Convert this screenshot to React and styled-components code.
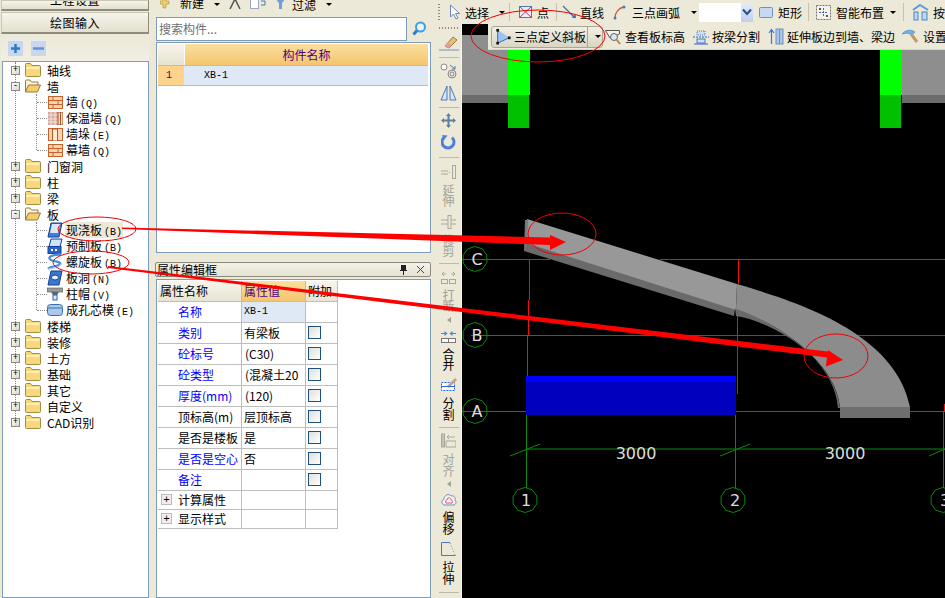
import React from "react";
import styled, { createGlobalStyle } from "styled-components";

const GlobalStyle = createGlobalStyle`
    html, body { margin: 0; padding: 0; }
    body { font: 12px "Noto Sans CJK SC", "Liberation Sans", sans-serif; color: #000; }
`;

const Page = styled.div`
    position: relative;
    display: flex;
    width: 945px;
    height: 598px;
    overflow: hidden;
    background: #ECE9D8;
`;

/* ---------- left column ---------- */
const LeftColumn = styled.div`
    display: flex;
    flex-direction: column;
    width: 155px;
    flex: none;
    padding: 0 6px 0 1px;
    box-sizing: border-box;
`;
const NavButton = styled.div`
    display: flex;
    align-items: ${p => (p.$clipped ? "flex-end" : "center")};
    justify-content: center;
    height: ${p => p.$h}px;
    margin-bottom: 1px;
    padding-bottom: ${p => (p.$clipped ? 6 : 0)}px;
    overflow: hidden;
    line-height: ${p => (p.$clipped ? "6px" : "20px")};
    font-size: 12px;
    letter-spacing: 0.5px;
    background: linear-gradient(#F6F4EC, #E4E0CE);
    border: 1px solid #C9C6B4;
    border-bottom: 2px solid #8C8B7C;
    border-right-color: #8C8B7C;
    box-sizing: border-box;
`;
const TreeTools = styled.div`
    display: flex;
    align-items: center;
    gap: 8px;
    height: 26px;
    padding-left: 7px;
    background: linear-gradient(#ECE9D8, #F1EFE4);
`;
const SquareButton = styled.div`
    display: flex;
    align-items: center;
    justify-content: center;
    width: 15px;
    height: 15px;
    background: #C9D6EE;
    border-top: 1px solid #E4ECF8;
`;
const TreePanel = styled.div`
    flex: 1;
    margin-left: 1px;
    background: #FFF;
    border: 1px solid #7F9DB9;
`;
const TreeGuide = styled.div`
    margin-left: 12px;
    border-left: 1px dotted #888;
`;
const ChildGuide = styled.div`
    margin-left: 20px;
    border-left: 1px dotted #888;
`;
const Row = styled.div`
    position: relative;
    display: flex;
    align-items: center;
    height: 16px;
    white-space: nowrap;
    ${p => p.$last && `
        &::before {
            content: "";
            position: absolute;
            left: -1px;
            top: 9px;
            bottom: 0;
            width: 1px;
            background: #FFF;
        }
    `}
`;
const Expander = styled.span`
    position: relative;
    display: flex;
    align-items: center;
    justify-content: center;
    width: 9px;
    height: 9px;
    margin: 0 5px 0 -5px;
    flex: none;
    background: linear-gradient(135deg, #FFF, #D8D4C4);
    border: 1px solid #8A8A8A;
    box-sizing: border-box;
    font: 9px/7px "Liberation Mono", monospace;
`;
const Connector = styled.span`
    width: 10px;
    flex: none;
    border-top: 1px dotted #888;
`;
const IconSlot = styled.span`
    display: flex;
    align-items: center;
    justify-content: center;
    width: ${p => p.$w || 16}px;
    flex: none;
`;
const TreeLabel = styled.span`
    margin-left: ${p => p.$indent || 5}px;
    padding: 0 1px;
    line-height: 15px;
    background: ${p => (p.$selected ? "#ECE9D8" : "transparent")};
`;
const Key = styled.span`
    margin-left: 2px;
    font: 10px "Liberation Mono", monospace;
`;

/* ---------- middle column ---------- */
const MiddleColumn = styled.div`
    display: flex;
    flex-direction: column;
    width: 278px;
    flex: none;
`;
const ClippedBar = styled.div`
    display: flex;
    align-items: flex-end;
    gap: 9px;
    height: 13px;
    padding: 0 0 4px 5px;
    overflow: hidden;
    box-sizing: border-box;
    line-height: 8px;
`;
const SearchRow = styled.div`
    display: flex;
    align-items: center;
    height: 25px;
    margin: 3px 2px 1px 1px;
`;
const SearchBox = styled.div`
    display: flex;
    align-items: center;
    width: 251px;
    height: 24px;
    padding-left: 2px;
    box-sizing: border-box;
    color: #6F6F6F;
    background: #FFF;
    border: 1px solid #7F9DB9;
`;
const SearchButton = styled.div`
    display: flex;
    align-items: center;
    justify-content: center;
    flex: 1;
`;
const ListPanel = styled.div`
    height: 211px;
    margin: 0 2px 0 1px;
    padding: 1px 2px 1px 1px;
    box-sizing: border-box;
    background: #FFF;
    border: 1px solid #7F9DB9;
`;
const ListRow = styled.div`
    display: grid;
    grid-template-columns: 26px 1fr;
    height: ${p => p.$h}px;
    border-bottom: 1px solid #B8BCC4;
`;
const CornerCell = styled.div`
    background: linear-gradient(#F7F5EC, #E6E2D0);
`;
const NumberCell = styled.div`
    display: flex;
    align-items: center;
    padding-left: 8px;
    color: #400070;
    font: 10px "Liberation Mono", monospace;
    background: #FFD38C;
`;
const OrangeHead = styled.div`
    display: flex;
    align-items: center;
    justify-content: center;
    color: #4B0082;
    background: linear-gradient(#FADF9E, #F4C56E);
    border-left: 1px solid #FFF;
`;
const NameCell = styled.div`
    display: flex;
    align-items: center;
    padding-left: 20px;
    font: 10px "Liberation Mono", monospace;
    background: #DFE8F5;
`;
const TitleBar = styled.div`
    display: flex;
    align-items: center;
    height: 15px;
    margin: 9px 2px 0 0;
    padding: 0 5px 0 1px;
    box-sizing: border-box;
    background: linear-gradient(#F4F2E8, #E6E3D2);
    border: 1px solid #8A8A80;
    border-radius: 2px;
`;
const TitleText = styled.span`
    flex: 1;
    line-height: 13px;
`;
const TitleIcons = styled.span`
    display: flex;
    align-items: center;
    gap: 8px;
`;
const PropertyPanel = styled.div`
    flex: 1;
    margin: 2px 2px 0 1px;
    padding: 1px 1px;
    background: #FFF;
    border: 1px solid #7F9DB9;
`;
const PropRow = styled.div`
    display: grid;
    grid-template-columns: 84px 64px 32px;
    width: 180px;
    height: ${p => p.$h || 21}px;
`;
const PropCell = styled.div`
    display: flex;
    align-items: center;
    overflow: hidden;
    white-space: nowrap;
    padding: 0 0 1px ${p => p.$pad || 0}px;
    color: ${p => p.$color || "#000"};
    font-family: ${p => (p.$mono ? '"Liberation Mono", monospace' : "inherit")};
    font-size: ${p => (p.$mono ? "10px" : "12px")};
    background: ${p => p.$bg || "#FFF"};
    border-right: 1px solid #BDBDBD;
    border-bottom: 1px solid #BDBDBD;
    box-sizing: border-box;
`;
const PlusBox = styled.span`
    display: flex;
    align-items: center;
    justify-content: center;
    width: 11px;
    height: 11px;
    margin: 0 6px 0 3px;
    font: 11px/10px "Liberation Mono", monospace;
    background: #EEE;
    border: 1px solid #BBB;
    box-sizing: border-box;
`;
const CheckBox = styled.span`
    width: 13px;
    height: 13px;
    margin-left: 2px;
    background: linear-gradient(135deg, #DEDEDA, #FFF);
    border: 1px solid #1C5180;
    box-sizing: border-box;
`;

/* ---------- right column ---------- */
const RightColumn = styled.div`
    display: flex;
    flex-direction: column;
    flex: 1;
    min-width: 0;
    margin-left: 3px;
`;
const TopBar = styled.div`
    display: flex;
    align-items: center;
    height: 24px;
    padding-left: 2px;
    overflow: hidden;
    white-space: nowrap;
`;
const Grip = styled.span`
    width: 2px;
    height: 16px;
    margin-right: ${p => p.$gap || 0}px;
    flex: none;
    background: repeating-linear-gradient(#8C8A7C 0 1px, transparent 1px 3px);
`;
const BarItem = styled.span`
    display: flex;
    align-items: center;
    gap: ${p => p.$gap || 5}px;
    margin-left: ${p => p.$ml || 0}px;
    flex: none;
`;
const BarSep = styled.span`
    width: 1px;
    height: 18px;
    margin: 0 ${p => p.$r || 9}px 0 ${p => p.$l || 9}px;
    flex: none;
    background: #C5C2B0;
`;
const Caret = styled.span`
    width: 0;
    height: 0;
    margin-left: ${p => p.$ml || 6}px;
    margin-bottom: ${p => p.$lift || 0}px;
    flex: none;
    border: 3px solid transparent;
    border-top: 3px solid #000;
    border-bottom: 0;
`;
const SelectBox = styled.span`
    display: flex;
    align-items: center;
    justify-content: flex-end;
    width: 54px;
    height: 19px;
    margin-left: ${p => p.$ml || 7}px;
    flex: none;
    background: #FFF;
`;
const SelectArrow = styled.span`
    display: flex;
    align-items: center;
    justify-content: center;
    width: 12px;
    height: 19px;
    background: linear-gradient(#E4ECF8, #BFD0EC);
`;
const WorkArea = styled.div`
    position: relative;
    display: flex;
    flex: 1;
    min-height: 0;
`;
const SideBar = styled.div`
    display: flex;
    flex-direction: column;
    align-items: center;
    width: 26px;
    flex: none;
    border-right: 1px solid #F7F6EE;
    box-sizing: border-box;
`;
const SideGrip = styled.div`
    width: 20px;
    height: 2px;
    margin: 3px 0 2px;
    flex: none;
    background: repeating-linear-gradient(90deg, #8C8A7C 0 1px, transparent 1px 3px);
`;
const SideSep = styled.div`
    width: 20px;
    height: 1px;
    margin: 3px 0 2px;
    flex: none;
    background: #BDBAA8;
`;
const SideButton = styled.div`
    display: flex;
    flex-direction: column;
    align-items: center;
    justify-content: center;
    gap: 5px;
    height: ${p => p.$h}px;
    flex: none;
`;
const SideLabel = styled.span`
    width: 12px;
    font-size: 12px;
    line-height: 11.5px;
    text-align: center;
    color: ${p => (p.$off ? "#A3A198" : "#000")};
`;
const MoreMark = styled.span`
    width: 0;
    height: 0;
    border: 3px solid transparent;
    border-right: 4px solid #A3A198;
    border-left: 0;
`;
const Canvas = styled.div`
    flex: 1;
    background: #000;
    overflow: hidden;
`;
const CanvasSvg = styled.svg`
    display: block;
`;
const FloatBar = styled.div`
    position: absolute;
    top: 0;
    left: 52px;
    right: 0;
    display: flex;
    align-items: center;
    height: 26px;
    padding-left: 3px;
    white-space: nowrap;
    overflow: hidden;
    background: #ECE9D8;
    border-bottom: 1px solid #D8D5C4;
    box-sizing: border-box;
`;
const PressedButton = styled.div`
    display: flex;
    align-items: center;
    width: 112px;
    height: 22px;
    flex: none;
    background: linear-gradient(#F1EFE4, #DAD6C4);
    border: 1px solid #A9A794;
    border-radius: 3px;
    box-sizing: border-box;
`;
const PressedLabel = styled.span`
    display: flex;
    align-items: center;
    gap: 3px;
    flex: 1;
    padding-left: 3px;
`;
const PressedArrow = styled.span`
    display: flex;
    align-items: center;
    justify-content: center;
    width: 14px;
    height: 20px;
    border-left: 1px solid #A9A794;
`;
const Overlay = styled.svg`
    position: absolute;
    top: 0;
    left: 0;
    pointer-events: none;
`;

/* ---------- tree icons ---------- */
const Folder = () => (
    <svg width="16" height="14" viewBox="0 0 16 14">
        <path d="M.5 3V12.5a1 1 0 0 0 1 1h13a1 1 0 0 0 1-1V3.500a1 1 0 0 0-1-1H7L5.500.5H1.500a1 1 0 0 0-1 1Z" fill="#F8D877" stroke="#A58B4A" />
        <path d="M1.500 4H14.500V6H1.500Z" fill="#FCEFB9" />
    </svg>
);
const OpenFolder = () => (
    <svg width="16" height="14" viewBox="0 0 16 14">
        <path d="M.5 13V2a1 1 0 0 1 1-1H5L6.500 3H13V6" fill="#FBF3D0" stroke="#8D7C52" />
        <path d="M.5 13 3.500 6H15.500L12.500 13Z" fill="#F6CE63" stroke="#8D7C52" />
    </svg>
);
const Brick = () => (
    <svg width="15" height="13" viewBox="0 0 15 13">
        <rect x=".5" y=".5" width="14" height="12" fill="#F6D4B5" stroke="#C9622A" />
        <path d="M1 4.500H14M1 8.500H14M5 1V4.500M10 4.500V8.500M5 8.500V12" stroke="#C9622A" />
    </svg>
);
const InsulatedWall = () => (
    <svg width="15" height="13" viewBox="0 0 15 13">
        <rect width="10" height="13" fill="#D9A9A0" />
        <path d="M0 3H10M0 7H10M0 10H10M3 0V13M7 0V13" stroke="#F2E3DC" />
        <rect x="10" width="5" height="13" fill="#F7D9BC" stroke="#A8522A" />
        <path d="M12.500 0V13" stroke="#A8522A" />
    </svg>
);
const Pier = () => (
    <svg width="15" height="13" viewBox="0 0 15 13">
        <rect x=".5" y=".5" width="14" height="12" fill="#F6D4B5" stroke="#C9622A" />
        <rect x="4.500" y="1" width="5" height="12" fill="#FBEBD8" stroke="#B9551F" />
    </svg>
);
const Slab = () => (
    <svg width="16" height="16" viewBox="0 0 16 16">
        <path d="M4 1H15L12 15H1Z" fill="#3F7FD6" stroke="#123E9A" />
        <path d="M5 2H13.500L11 11H3Z" fill="#D8E8FA" />
    </svg>
);
const PrecastSlab = () => (
    <svg width="16" height="16" viewBox="0 0 16 16">
        <path d="M4 1H15L13 9H2Z" fill="#D0E2F8" stroke="#123E9A" />
        <rect x="1" y="8.500" width="13" height="7" fill="#2A62C8" stroke="#123E9A" />
        <path d="M4 11H6V13H4ZM8 11H10V13H8Z" fill="#FFF" />
    </svg>
);
const SpiralSlab = () => (
    <svg width="17" height="18" viewBox="0 0 17 18">
        <path d="M15 1C7 1 1 3 3 6S15 8 14 11 5 13 1 16" fill="none" stroke="#4C8DDC" strokeWidth="2.500" />
        <path d="M1 17C6 15 15 15 15 11" fill="none" stroke="#B6D4F4" strokeWidth="1.500" />
    </svg>
);
const SlabHole = () => (
    <svg width="16" height="16" viewBox="0 0 16 16">
        <path d="M4 1H15L12 15H1Z" fill="#3A78D0" stroke="#123E9A" />
        <ellipse cx="8" cy="7.500" rx="3.500" ry="2.500" fill="#E6F0FC" stroke="#123E9A" />
    </svg>
);
const ColumnCap = () => (
    <svg width="16" height="14" viewBox="0 0 16 14">
        <rect y="1" width="16" height="4" fill="#9A9A9A" stroke="#555" strokeWidth=".6" />
        <path d="M4 5H12L10 8H6Z" fill="#666" />
        <rect x="6" y="8" width="4" height="5" fill="#DCEAFA" stroke="#2A62C8" />
    </svg>
);
const CoreMold = () => (
    <svg width="16" height="14" viewBox="0 0 16 14">
        <rect x=".5" y="1.500" width="15" height="11" rx="3" fill="#A9C9EC" stroke="#3A6EA8" />
        <path d="M1 5H15" stroke="#3A6EA8" />
    </svg>
);

/* ---------- toolbar icons ---------- */
const Cursor = () => (
    <svg width="12" height="16" viewBox="0 0 12 16">
        <path d="M1.500 1V13L4.500 10L7 15L9 14L6.500 9.500H10.500Z" fill="#FFF" stroke="#6A86B8" />
    </svg>
);
const PointIcon = () => (
    <svg width="13" height="12" viewBox="0 0 13 12">
        <rect x=".5" y=".5" width="12" height="11" fill="#E9F0FA" stroke="#4C78C0" />
        <path d="M1 1 12 11M12 1 1 11" stroke="#C0405A" />
    </svg>
);
const LineIcon = () => (
    <svg width="15" height="14" viewBox="0 0 15 14">
        <path d="M1 1 13 13" stroke="#3A6EB0" strokeWidth="1.300" />
        <path d="M14 13 9.500 12.500 13.500 9Z" fill="#3A6EB0" />
    </svg>
);
const ArcIcon = () => (
    <svg width="13" height="15" viewBox="0 0 13 15">
        <path d="M2 13C2 7 6 3 11 2" fill="none" stroke="#C06040" strokeWidth="1.300" />
        <circle cx="2" cy="13" r="1.500" fill="#4C78C0" />
        <circle cx="11" cy="2" r="1.500" fill="#4C78C0" />
    </svg>
);
const RectIcon = () => (
    <svg width="14" height="11" viewBox="0 0 14 11">
        <rect x=".5" y=".5" width="13" height="10" rx="1" fill="#C6D8F2" stroke="#6E92C8" />
    </svg>
);
const SmartIcon = () => (
    <svg width="15" height="15" viewBox="0 0 15 15">
        <rect x=".5" y=".5" width="14" height="14" fill="#F4F2EA" stroke="#777" strokeDasharray="2 1" />
        <path d="M7.500 3V12M3 7.500H12" stroke="#3A6EB0" strokeDasharray="2 1" />
        <circle cx="4" cy="4" r="1" fill="#222" />
        <circle cx="11" cy="11" r="1" fill="#222" />
    </svg>
);
const BeamPlaceIcon = () => (
    <svg width="17" height="17" viewBox="0 0 17 17">
        <path d="M1 6 8 1 16 6" fill="none" stroke="#5C9CDC" strokeWidth="2" />
        <rect x="2" y="8" width="4" height="8" fill="#BCD8F2" stroke="#4C88C8" />
        <rect x="10" y="8" width="5" height="8" fill="#BCD8F2" stroke="#4C88C8" />
    </svg>
);
const ChevronIcon = () => (
    <svg width="10" height="8" viewBox="0 0 10 8">
        <path d="M1 1.500 5 6 9 1.500" fill="none" stroke="#27508C" strokeWidth="2" />
    </svg>
);
const TriangleTool = () => (
    <svg width="16" height="19" viewBox="0 0 18 19">
        <path d="M3 2 16 11 3 17Z" fill="#9CC4EE" />
        <path d="M3 2V17M3 17 16 11" stroke="#2A62C8" />
        <rect x="1.500" y="1" width="3" height="3" fill="#111" />
        <rect x="1.500" y="15.500" width="3" height="3" fill="#111" />
        <rect x="14.500" y="9.500" width="3" height="3" fill="#111" />
    </svg>
);
const ViewLevelIcon = () => (
    <svg width="16" height="16" viewBox="0 0 16 16">
        <path d="M.5 1.500H14.500V5L5 9Z" fill="#F4F4F0" stroke="#555" />
        <circle cx="9" cy="8" r="3.500" fill="#D8E8F6" stroke="#666" />
        <path d="M11.500 10.500 15 15" stroke="#B88A3A" strokeWidth="2" />
    </svg>
);
const SplitBeamIcon = () => (
    <svg width="16" height="16" viewBox="0 0 16 16">
        <rect x="4" y="2" width="8" height="4" fill="#CFE0F6" stroke="#4C78C0" strokeDasharray="1 1" />
        <path d="M0 8H16" stroke="#2A62C8" strokeDasharray="2 1" />
        <rect x="4" y="10" width="8" height="4" fill="#CFE0F6" stroke="#4C78C0" />
        <path d="M1 15H15" stroke="#2A62C8" />
    </svg>
);
const ExtendIcon = () => (
    <svg width="16" height="17" viewBox="0 0 16 17">
        <path d="M3.500 16V2M1 5 3.500 1.500 6 5" fill="none" stroke="#2C7CC8" strokeWidth="1.200" />
        <rect x="8" y="1" width="7" height="15" fill="#A9C6E6" stroke="#6E92C8" />
        <path d="M11.500 1V16" stroke="#6E92C8" />
    </svg>
);
const HammerIcon = () => (
    <svg width="17" height="15" viewBox="0 0 17 15">
        <path d="M0 5C3 1 9 0 13 3L10 6C7 4 4 4 0 5Z" fill="#6CB4EC" stroke="#3A80C0" strokeWidth=".6" />
        <path d="M9 5 15 13" stroke="#C09A6A" strokeWidth="3" />
    </svg>
);
const EraserIcon = () => (
    <svg width="20" height="16" viewBox="0 0 20 16">
        <path d="M6 11 14 2 18 5 10 13Z" fill="#E8C070" stroke="#A07840" />
        <path d="M6 11 9 7 12 10 10 13Z" fill="#E4A0A0" />
        <path d="M0 15H20" stroke="#6E92C8" />
    </svg>
);
const RingsIcon = () => (
    <svg width="18" height="16" viewBox="0 0 18 16">
        <circle cx="4" cy="4" r="3" fill="#FFF" stroke="#888" />
        <circle cx="12" cy="11" r="4" fill="none" stroke="#888" />
        <circle cx="12" cy="11" r="2" fill="none" stroke="#888" />
        <path d="M10 2 15 6M15 3V6H12" fill="none" stroke="#4C78C0" />
    </svg>
);
const MirrorIcon = () => (
    <svg width="17" height="16" viewBox="0 0 17 16">
        <path d="M7 1 1 15H7ZM10 1 16 15H10Z" fill="#D8E6F8" stroke="#4C78C0" />
    </svg>
);
const MoveIcon = () => (
    <svg width="15" height="15" viewBox="0 0 15 15">
        <path d="M7.500 0 10 3H8.500V6.500H12V5L15 7.500 12 10V8.500H8.500V12H10L7.500 15 5 12H6.500V8.500H3V10L0 7.500 3 5V6.500H6.500V3H5Z" fill="#5A82A8" />
    </svg>
);
const RotateIcon = () => (
    <svg width="15" height="15" viewBox="0 0 15 15">
        <path d="M3 2.500A6 6 0 1 0 11 2.500" fill="none" stroke="#4C82DC" strokeWidth="3" />
        <path d="M1 0 6.500 .5 3 5Z" fill="#4C82DC" />
    </svg>
);
const ExtendLines = () => (
    <svg width="15" height="14" viewBox="0 0 15 14">
        <path d="M0 6H7M0 9H7" stroke="#AAA89C" />
        <path d="M8 7.500H10" stroke="#AAA89C" strokeDasharray="1 1" />
        <rect x="11.500" y=".5" width="3" height="13" fill="none" stroke="#AAA89C" />
    </svg>
);
const TrimLines = () => (
    <svg width="15" height="14" viewBox="0 0 15 14">
        <path d="M0 5H15M0 9H15" stroke="#AAA89C" />
        <rect x="7" y=".5" width="3" height="13" fill="#ECE9D8" stroke="#AAA89C" />
    </svg>
);
const BreakIcon = () => (
    <svg width="15" height="12" viewBox="0 0 15 12">
        <path d="M5 2H1M1 2 3 0M1 2 3 4M10 2H14M14 2 12 0M14 2 12 4" fill="none" stroke="#AAA89C" />
        <rect x=".5" y="7.500" width="6" height="4" fill="none" stroke="#AAA89C" />
        <rect x="8.500" y="7.500" width="6" height="4" fill="none" stroke="#AAA89C" />
    </svg>
);
const MergeIcon = () => (
    <svg width="15" height="12" viewBox="0 0 15 12">
        <path d="M0 2.500H5M15 2.500H10" stroke="#4C82DC" />
        <path d="M6.500 2.500 3.500 0V5ZM8.500 2.500 11.500 0V5Z" fill="#4C82DC" />
        <rect x=".5" y="7.500" width="14" height="4" fill="#F8F8F4" stroke="#777" />
        <path d="M7.500 8V11" stroke="#777" />
    </svg>
);
const SplitIcon = () => (
    <svg width="16" height="15" viewBox="0 0 16 15">
        <rect x=".5" y="5.500" width="13" height="8" fill="#FFF" stroke="#2A62E8" strokeDasharray="2 1" />
        <path d="M6 9 14 1 16 3 8 11Z" fill="#C9A080" />
        <path d="M0 9.500H14" stroke="#2A62E8" />
    </svg>
);
const AlignIcon = () => (
    <svg width="15" height="15" viewBox="0 0 15 15">
        <rect x=".5" y="1" width="3" height="13" fill="#C4C2B8" stroke="#AAA89C" />
        <path d="M5 8H15V14H5ZM14 4H6M6 4 8 2M6 4 8 6" fill="none" stroke="#AAA89C" />
    </svg>
);
const OffsetIcon = () => (
    <svg width="16" height="13" viewBox="0 0 16 13">
        <path d="M4 12C0 12 0 7 3 6 3 2 8 0 10 3 13 2 15 5 14 7 16 9 15 12 12 12Z" fill="#F4F0F0" stroke="#6E92C8" />
        <path d="M5 10C4 8 5 7 6 7 6 4 10 4 10 7 11 7 12 8 11 10Z" fill="none" stroke="#E06060" />
    </svg>
);
const StretchIcon = () => (
    <svg width="15" height="14" viewBox="0 0 15 14">
        <path d="M.5 13.500V.5H9" fill="none" stroke="#4C78C0" />
        <path d="M.5 13.500H14.500" stroke="#4C78C0" />
        <path d="M9 1 14 13" stroke="#888" strokeDasharray="1 2" />
    </svg>
);

/* ---------- data ---------- */
const wallChildren = [
    { icon: <Brick />, name: "墙", key: "(Q)" },
    { icon: <InsulatedWall />, name: "保温墙", key: "(Q)" },
    { icon: <Pier />, name: "墙垛", key: "(E)" },
    { icon: <Brick />, name: "幕墙", key: "(Q)" },
];
const slabChildren = [
    { icon: <Slab />, name: "现浇板", key: "(B)", selected: true },
    { icon: <PrecastSlab />, name: "预制板", key: "(B)" },
    { icon: <SpiralSlab />, name: "螺旋板", key: "(B)" },
    { icon: <SlabHole />, name: "板洞", key: "(N)" },
    { icon: <ColumnCap />, name: "柱帽", key: "(V)" },
    { icon: <CoreMold />, name: "成孔芯模", key: "(E)" },
];
const tree = [
    { name: "轴线" },
    { name: "墙", children: wallChildren },
    { name: "门窗洞" },
    { name: "柱" },
    { name: "梁" },
    { name: "板", children: slabChildren },
    { name: "楼梯" },
    { name: "装修" },
    { name: "土方" },
    { name: "基础" },
    { name: "其它" },
    { name: "自定义" },
    { name: "CAD识别" },
];
const BLUE = "#0000FF";
const props = [
    { name: "名称", value: "XB-1", color: BLUE, selected: true, noCheck: true, mono: true },
    { name: "类别", value: "有梁板", color: BLUE },
    { name: "砼标号", value: "(C30)", color: BLUE, pad: 3 },
    { name: "砼类型", value: "(混凝土20", color: BLUE, pad: 3 },
    { name: "厚度(mm)", value: "(120)", color: BLUE, pad: 3 },
    { name: "顶标高(m)", value: "层顶标高" },
    { name: "是否是楼板", value: "是" },
    { name: "是否是空心", value: "否", color: BLUE },
    { name: "备注", value: "", color: BLUE },
];
const sideItems = [
    { sep: true },
    { icon: <RingsIcon />, h: 21 },
    { icon: <MirrorIcon />, h: 23 },
    { sep: true },
    { icon: <MoveIcon />, h: 21 },
    { icon: <RotateIcon />, h: 23 },
    { sep: true },
    { icon: <ExtendLines />, label: "延伸", off: true, h: 51 },
    { icon: <TrimLines />, label: "修剪", off: true, h: 49 },
    { sep: true },
    { icon: <BreakIcon />, label: "打断", off: true, more: true, h: 62 },
    { icon: <MergeIcon />, label: "合并", h: 45 },
    { icon: <SplitIcon />, label: "分割", h: 51 },
    { sep: true },
    { icon: <AlignIcon />, label: "对齐", off: true, more: true, h: 60 },
    { icon: <OffsetIcon />, label: "偏移", h: 47 },
    { icon: <StretchIcon />, label: "拉伸", h: 52 },
    { sep: true },
];

/* ---------- drawing helpers ---------- */
const ringPoints = (cx, cy, r) =>
    Array.from({ length: 10 }, (_, i) => {
        const a = (i / 10) * Math.PI * 2 + 0.3;
        return `${(cx + r * Math.cos(a)).toFixed(1)},${(cy + r * Math.sin(a)).toFixed(1)}`;
    }).join(" ");

const AxisBubble = ({ cx, cy, label, tx }) => (
    <g>
        <polygon points={ringPoints(cx, cy, 12.5)} fill="none" stroke="#0A8A0A" />
        <text x={tx || cx} y={cy + 6} textAnchor="middle" fontFamily="DejaVu Sans, sans-serif" fontSize="16" fill="#DDD">{label}</text>
    </g>
);

const CadDrawing = () => (
    <CanvasSvg width="483" height="574" viewBox="462 24 483 574">
        {/* upper walls */}
        <rect x="462" y="35" width="46" height="60" fill="#8E8E8E" />
        <rect x="462" y="95" width="46" height="8" fill="#6C6C6C" />
        <rect x="902" y="50" width="43" height="45" fill="#8E8E8E" />
        <rect x="902" y="95" width="43" height="8" fill="#6C6C6C" />
        <rect x="508" y="50" width="22" height="45" fill="#00FF00" />
        <rect x="508" y="95" width="21" height="33" fill="#00C000" />
        <rect x="880" y="50" width="22" height="45" fill="#00FF00" />
        <rect x="880" y="95" width="21" height="33" fill="#00C000" />

        {/* grid lines */}
        <g stroke="#0A8A0A" fill="none">
            <path d="M462 259.500H529M471 335.500H528M462 411.500H526" />
            <path d="M525.500 449H945M526.500 415V488M735.500 415V488M943.500 411V488" />
            <path d="M510 456 540 444M720 456 750 444M929 456 945 449" />
        </g>
        <g stroke="#F01010" fill="none">
            <path d="M660 259.500H945M529 259.500H550M738.500 259.500V284M737.500 315V394" />
            <path d="M529.500 259V300M528.500 300V336M527.500 336V376" />
            <path d="M528 335.500H945M736 411.500H945" />
            <path d="M944.500 404V411" />
        </g>

        {/* blue beam */}
        <rect x="526" y="376" width="210" height="6" fill="#0000FF" />
        <rect x="526" y="382" width="210" height="33" fill="#0000BE" />

        {/* inclined slab */}
        <path d="M524 251 527 240 735 308 734 316Z" fill="#6A6A6A" />
        <path d="M527 219 737 284 736 310 526 243Z" fill="#989898" />
        <path d="M525 220H528L527 243 524 252Z" fill="#7A7A7A" />
        <path d="M735 308C775 322 835 360 838 408H840C835 360 775 322 736 316Z" fill="#6A6A6A" />
        <path d="M737 284C790 300 895 330 910 407H840C835 360 775 322 736 309Z" fill="#8C8C8C" />
        <rect x="840" y="407" width="70" height="11" fill="#6E6E6E" />

        <AxisBubble cx={475} cy={259} label="C" tx={477} />
        <AxisBubble cx={475} cy={335} label="B" tx={477} />
        <AxisBubble cx={475} cy={411} label="A" tx={477} />
        <AxisBubble cx={525} cy={500} label="1" tx={526} />
        <AxisBubble cx={733} cy={500} label="2" tx={735} />
        <AxisBubble cx={943} cy={500} label="3" tx={945} />
        <text x="636" y="459" textAnchor="middle" fontFamily="DejaVu Sans, sans-serif" fontSize="16" fill="#DDD">3000</text>
        <text x="845" y="459" textAnchor="middle" fontFamily="DejaVu Sans, sans-serif" fontSize="16" fill="#DDD">3000</text>
    </CanvasSvg>
);

const TreeItem = ({ node, last }) => (
    <>
        <Row $last={last}>
            <Expander>{node.children ? "-" : "+"}</Expander>
            <IconSlot>{node.children ? <OpenFolder /> : <Folder />}</IconSlot>
            <TreeLabel $indent={5}>{node.name}</TreeLabel>
        </Row>
        {node.children && (
            <ChildGuide>
                {node.children.map((c, i) => (
                    <Row key={c.name} $last={i === node.children.length - 1}>
                        <Connector />
                        <IconSlot>{c.icon}</IconSlot>
                        <TreeLabel $indent={2} $selected={c.selected}>{c.name}<Key>{c.key}</Key></TreeLabel>
                    </Row>
                ))}
            </ChildGuide>
        )}
    </>
);

export default function App() {
    return (
        <Page>
            <GlobalStyle />

            {/* 导航 */}
            <LeftColumn>
                <NavButton $h={11} $clipped>工程设置</NavButton>
                <NavButton $h={22}>绘图输入</NavButton>
                <TreeTools>
                    <SquareButton>
                        <svg width="11" height="11" viewBox="0 0 11 11"><path d="M5.500 1V10M1 5.500H10" stroke="#2C7CC8" strokeWidth="2.500" /></svg>
                    </SquareButton>
                    <SquareButton>
                        <svg width="11" height="11" viewBox="0 0 11 11"><path d="M0 5.500H11" stroke="#5C94D8" strokeWidth="2.500" /></svg>
                    </SquareButton>
                </TreeTools>
                <TreePanel>
                    <TreeGuide>
                        {tree.map((node, i) => (
                            <TreeItem key={node.name} node={node} last={i === tree.length - 1} />
                        ))}
                    </TreeGuide>
                </TreePanel>
            </LeftColumn>

            {/* 构件列表 + 属性 */}
            <MiddleColumn>
                <ClippedBar>
                    <BarItem $gap={6}>
                        <svg width="14" height="12" viewBox="0 0 14 12"><path d="M3 1H6V4H9V7H6V11H3V7H0V4H3Z" fill="#F0D060" stroke="#B09030" strokeWidth=".6" /><path d="M7 2H14" stroke="#333" /></svg>
                        <span>新建</span>
                    </BarItem>
                    <Caret $ml={1} $lift={3} />
                    <svg width="12" height="11" viewBox="0 0 12 11"><path d="M1 11 6 1 11 11" fill="none" stroke="#555" strokeWidth="1.500" /></svg>
                    <svg width="16" height="11" viewBox="0 0 16 11"><rect x=".5" y=".5" width="8" height="10" fill="#FFF" stroke="#9AA8C0" /><path d="M11 3H15V7H11" fill="none" stroke="#4C78C0" /></svg>
                    <svg width="11" height="11" viewBox="0 0 11 11"><path d="M0 0H11L7 5V11H4V5Z" fill="#6CA0DC" /></svg>
                    <BarItem $ml={-3}>过滤</BarItem>
                    <Caret $ml={1} $lift={3} />
                </ClippedBar>
                <SearchRow>
                    <SearchBox>搜索构件...</SearchBox>
                    <SearchButton>
                        <svg width="15" height="15" viewBox="0 0 15 15"><circle cx="8.500" cy="6" r="4.500" fill="#E8F4FC" stroke="#3FA0E0" strokeWidth="2" /><path d="M5 9.500 1.500 13.500" stroke="#2C7CC8" strokeWidth="3" /></svg>
                    </SearchButton>
                </SearchRow>
                <ListPanel>
                    <ListRow $h={21}>
                        <CornerCell />
                        <OrangeHead>构件名称</OrangeHead>
                    </ListRow>
                    <ListRow $h={19}>
                        <NumberCell>1</NumberCell>
                        <NameCell>XB-1</NameCell>
                    </ListRow>
                </ListPanel>

                <TitleBar>
                    <TitleText>属性编辑框</TitleText>
                    <TitleIcons>
                        <svg width="9" height="10" viewBox="0 0 9 10"><path d="M2 0H7V5H8V6H5V10H4V6H1V5H2Z" fill="#222" /></svg>
                        <svg width="9" height="9" viewBox="0 0 9 9"><path d="M1 1 8 8M8 1 1 8" stroke="#444" /></svg>
                    </TitleIcons>
                </TitleBar>
                <PropertyPanel>
                    <PropRow>
                        <PropCell $pad={2} $bg="linear-gradient(#F7F5EC, #E8E4D4)">属性名称</PropCell>
                        <PropCell $pad={2} $color="#4B0082" $bg="linear-gradient(#FADF9E, #F4C56E)">属性值</PropCell>
                        <PropCell $pad={2} $bg="linear-gradient(#F7F5EC, #E8E4D4)">附加</PropCell>
                    </PropRow>
                    {props.map(p => (
                        <PropRow key={p.name}>
                            <PropCell $pad={20} $color={p.color}>{p.name}</PropCell>
                            <PropCell $pad={p.pad || 2} $mono={p.mono} $bg={p.selected ? "#DFE8F5" : "#FFF"}>{p.value}</PropCell>
                            <PropCell>{!p.noCheck && <CheckBox />}</PropCell>
                        </PropRow>
                    ))}
                    <PropRow $h={19}>
                        <PropCell><PlusBox>+</PlusBox>计算属性</PropCell>
                        <PropCell />
                        <PropCell />
                    </PropRow>
                    <PropRow $h={19}>
                        <PropCell><PlusBox>+</PlusBox>显示样式</PropCell>
                        <PropCell />
                        <PropCell />
                    </PropRow>
                </PropertyPanel>
            </MiddleColumn>

            {/* 绘图区 */}
            <RightColumn>
                <TopBar>
                    <Grip $gap={9} />
                    <BarItem $gap={4}><Cursor />选择<Caret /></BarItem>
                    <BarSep $l={4} />
                    <BarItem><PointIcon />点</BarItem>
                    <BarSep $l={7} $r={5} />
                    <BarItem $gap={3}><LineIcon />直线</BarItem>
                    <BarItem $ml={9} $gap={6}><ArcIcon />三点画弧<Caret $ml={5} /></BarItem>
                    <SelectBox $ml={2}><SelectArrow><ChevronIcon /></SelectArrow></SelectBox>
                    <BarItem $ml={6}><RectIcon />矩形</BarItem>
                    <BarSep $l={6} $r={7} />
                    <BarItem><SmartIcon />智能布置<Caret $ml={1} /></BarItem>
                    <BarSep $l={7} $r={8} />
                    <BarItem $gap={4}><BeamPlaceIcon />按梁</BarItem>
                </TopBar>
                <WorkArea>
                    <SideBar>
                        <SideGrip />
                        <SideButton $h={23}><EraserIcon /></SideButton>
                        {sideItems.map((it, i) =>
                            it.sep ? (
                                <SideSep key={i} />
                            ) : (
                                <SideButton key={i} $h={it.h}>
                                    {it.icon}
                                    {it.label && <SideLabel $off={it.off}>{it.label}</SideLabel>}
                                    {it.more && <MoreMark />}
                                </SideButton>
                            )
                        )}
                    </SideBar>
                    <Canvas><CadDrawing /></Canvas>
                    <FloatBar>
                        <PressedButton>
                            <PressedLabel><TriangleTool />三点定义斜板</PressedLabel>
                            <PressedArrow><Caret $ml={0} /></PressedArrow>
                        </PressedButton>
                        <BarItem $ml={2} $gap={4}><ViewLevelIcon />查看板标高</BarItem>
                        <BarItem $ml={8} $gap={3}><SplitBeamIcon />按梁分割</BarItem>
                        <BarItem $ml={8} $gap={3}><ExtendIcon />延伸板边到墙、梁边</BarItem>
                        <BarItem $ml={7} $gap={4}><HammerIcon />设置</BarItem>
                    </FloatBar>
                </WorkArea>
            </RightColumn>

            {/* 标注 */}
            <Overlay width="945" height="598" viewBox="0 0 945 598">
                <g fill="none" stroke="#F00000">
                    <ellipse cx="97" cy="229" rx="39" ry="12" />
                    <ellipse cx="91" cy="262.500" rx="38" ry="11.500" />
                    <ellipse cx="538" cy="36" rx="67" ry="26" />
                    <ellipse cx="562" cy="234" rx="34" ry="21" />
                    <ellipse cx="836" cy="356" rx="32" ry="22" />
                </g>
                <path d="M122 227.500 550 237.500V235L566 242 550 250V245L122 229Z" fill="#FF0000" />
                <path d="M108 266 828 351.500V350L843 360 826 366.500 827 357.500 108 268Z" fill="#FF0000" />
            </Overlay>
        </Page>
    );
}
